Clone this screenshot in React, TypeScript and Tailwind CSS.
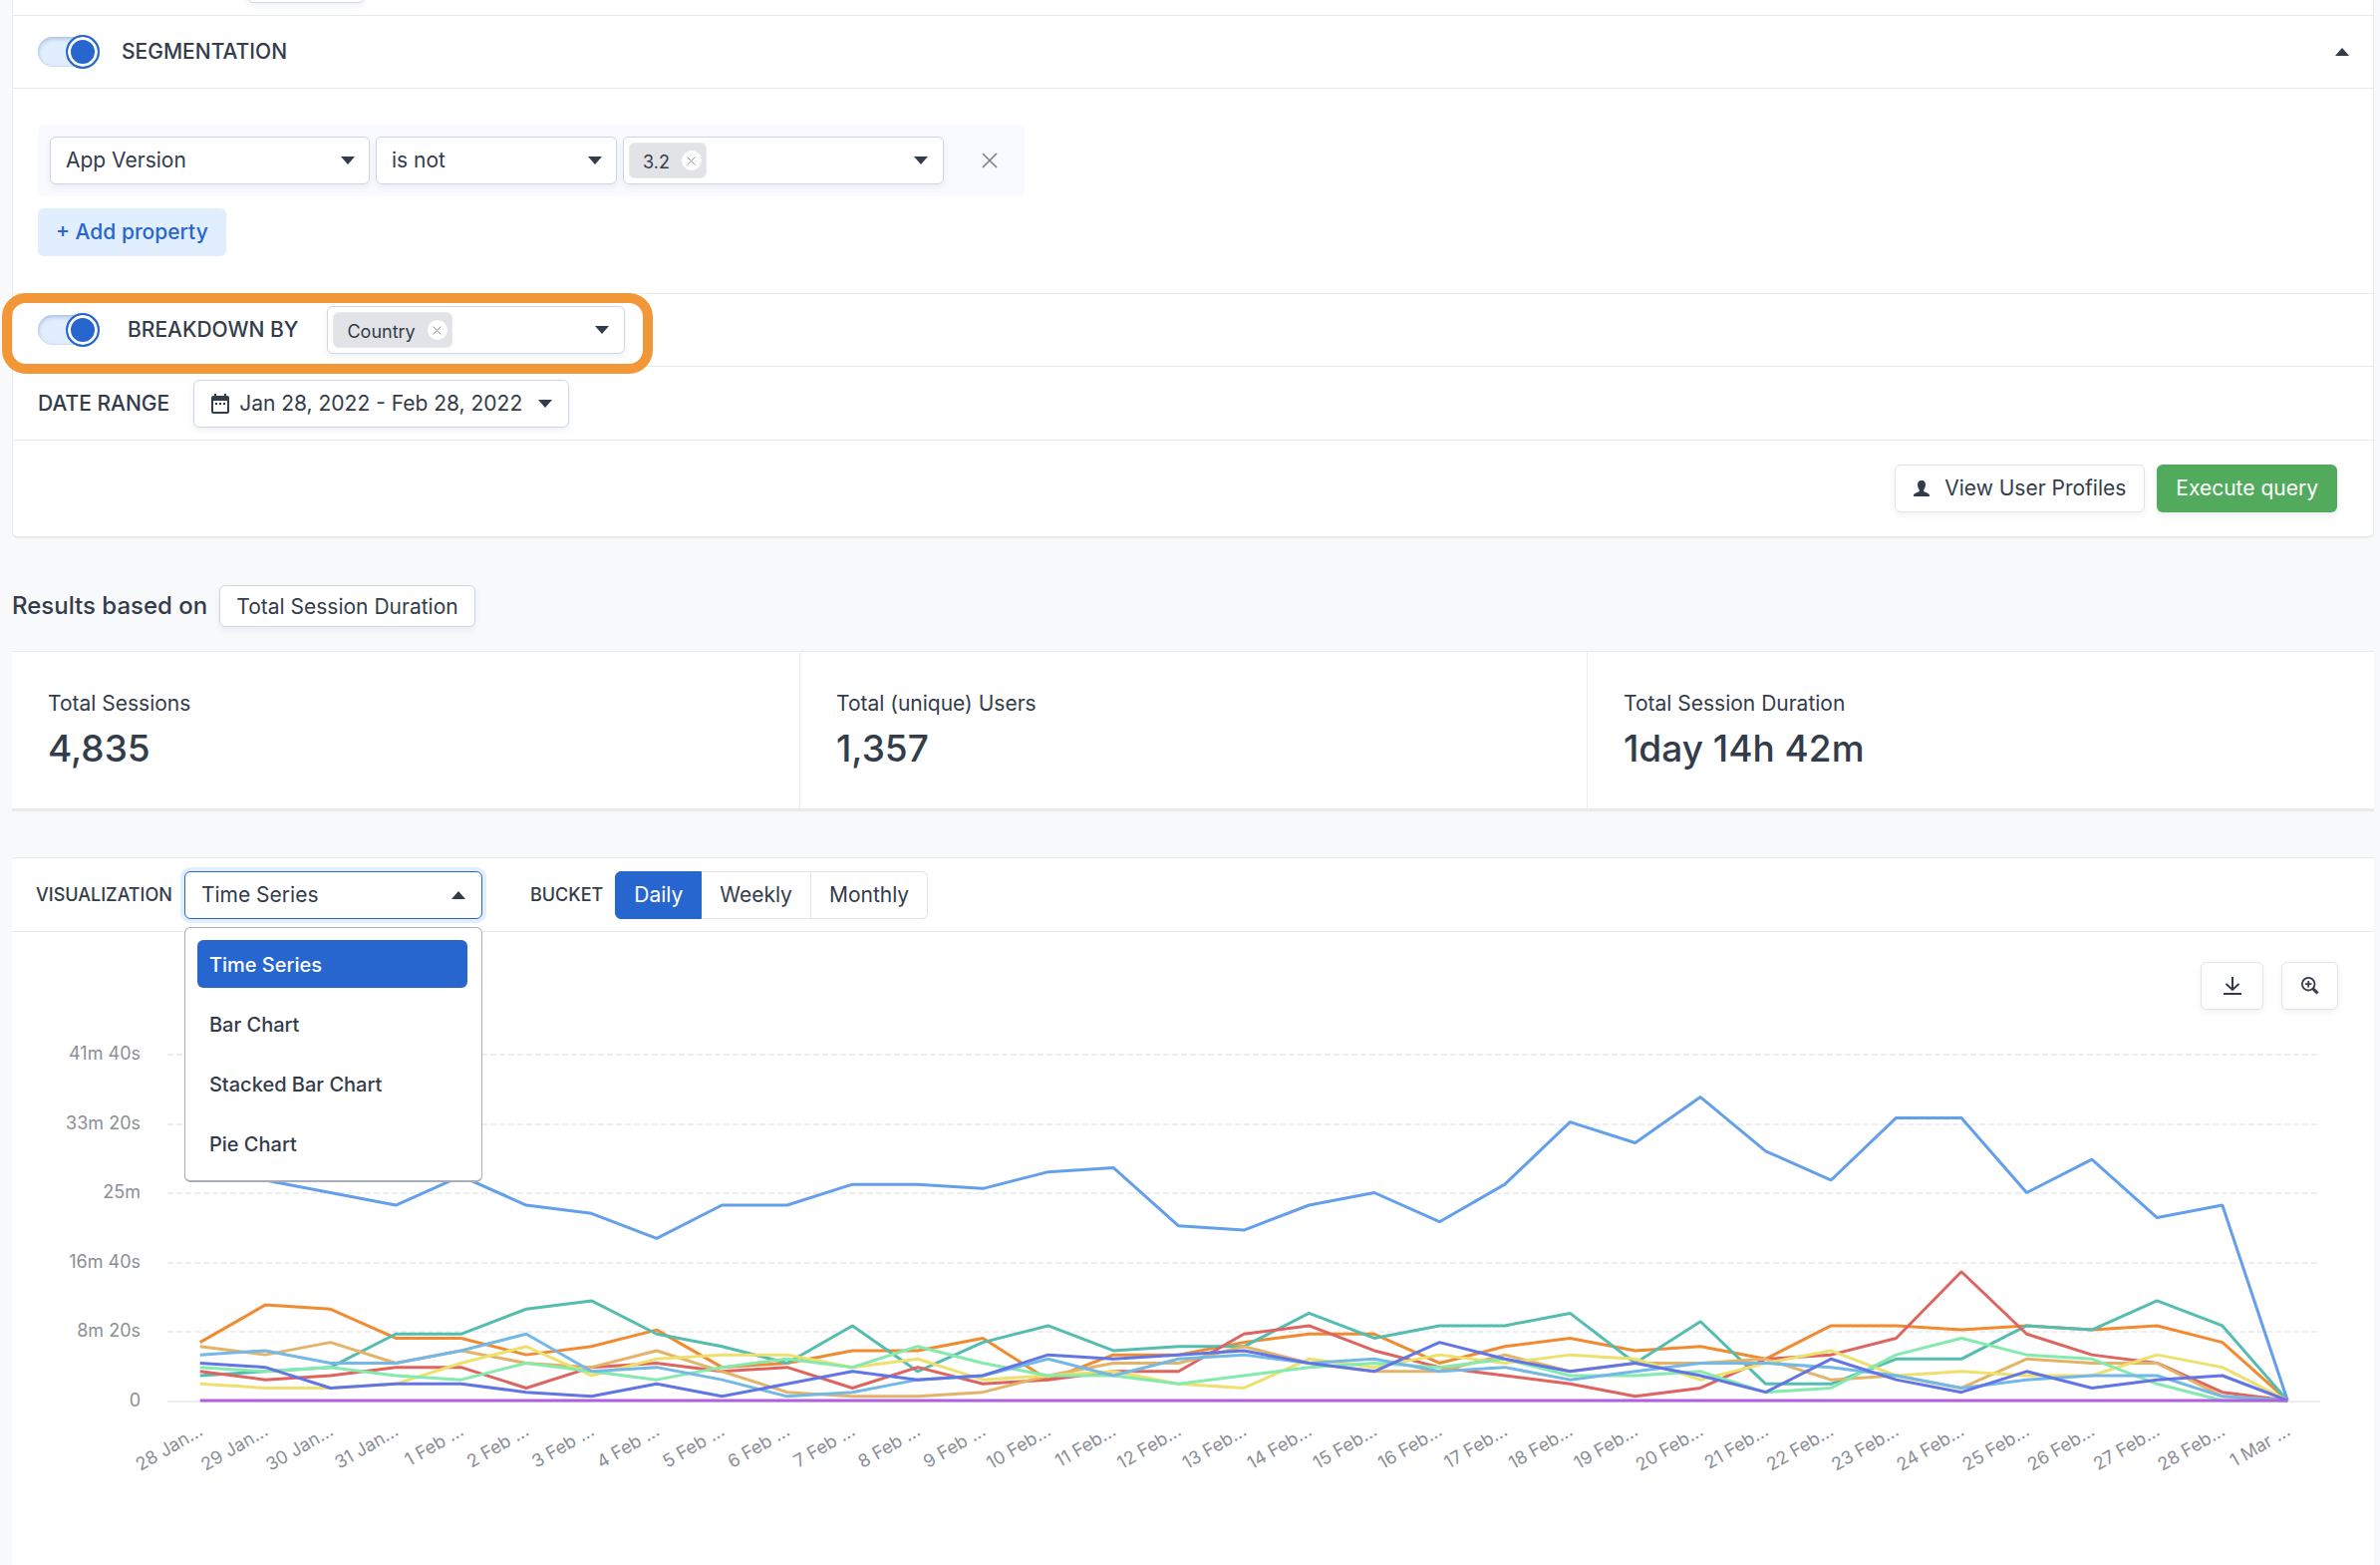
import { useId, useState } from 'react'
import type { ReactNode } from 'react'

const FIELD = 'rounded-md border border-[#cfd5e6] bg-white shadow-[0_3px_6px_rgba(40,50,80,0.07)]'
const PLAIN = 'rounded-md border border-[#e2e4e8] bg-white shadow-[0_3px_6px_rgba(40,50,80,0.06)]'

function Caret({ up = false }: { up?: boolean }) {
  return (
    <svg viewBox="0 0 14 8" className="h-2 w-3.5 shrink-0 fill-[#333c4a]" aria-hidden="true">
      <path d={up ? 'M0 8 7 0 14 8Z' : 'M0 0H14L7 8Z'} />
    </svg>
  )
}

function Cross({ className }: { className: string }) {
  return (
    <svg viewBox="0 0 16 16" className={className} fill="none" aria-hidden="true">
      <path d="M1 1 15 15M15 1 1 15" strokeWidth="1.6" />
    </svg>
  )
}

function Toggle({ id }: { id: string }) {
  const [on, setOn] = useState(true)
  return (
    <input
      id={id}
      type="checkbox"
      role="switch"
      checked={on}
      onChange={() => setOn(!on)}
      className="flex h-[30px] w-[62px] shrink-0 appearance-none items-center rounded-full bg-[#e1eefd] shadow-[inset_0_2px_4px_rgba(37,80,160,0.28),inset_0_0_2px_rgba(37,80,160,0.2)] before:size-[34px] before:shrink-0 before:rounded-full before:border-2 before:border-[#2766cf] before:bg-[#2766cf] before:shadow-[inset_0_0_0_3px_white] before:content-[''] checked:justify-end"
    />
  )
}

function Select({ label, value, className }: { label: string; value: string; className: string }) {
  return (
    <div className={`relative ${className}`}>
      <select aria-label={label} className={`h-12 w-full appearance-none px-[15px] pb-px ${FIELD}`}>
        <option>{value}</option>
      </select>
      <span className="pointer-events-none absolute inset-y-0 right-[15px] flex items-center">
        <Caret />
      </span>
    </div>
  )
}

function TagField({ label, tag, className }: { label: string; tag: string; className: string }) {
  return (
    <div className={`flex h-12 items-center pr-[15px] pl-[5px] ${FIELD} ${className}`}>
      <span className="flex h-9 items-center gap-3 rounded-md border border-[#e8eaee] bg-[#e2e3e7] pr-1 pl-[13px] text-lg">
        <span className="pt-1">{tag}</span>
        <button aria-label={`Remove ${tag}`} className="flex size-5 items-center justify-center rounded-full bg-white">
          <Cross className="size-[9px] stroke-[#888]" />
        </button>
      </span>
      <input aria-label={label} className="min-w-0 flex-1 outline-none" />
      <Caret />
    </div>
  )
}

function Stat({ label, value }: { label: string; value: string }) {
  return (
    <div className="border-l border-[#eceded] px-9 pt-9 first:border-l-0">
      <p className="text-[21px]/8">{label}</p>
      <p className="mt-1 text-[37px]/[50px] font-medium">{value}</p>
    </div>
  )
}

/* Session duration per day, in half minutes */
const SERIES = [
  { color: '#649fec', data: [55, 53, 50, 47, 54, 47, 45, 39, 47, 47, 52, 52, 51, 55, 56, 42, 41, 47, 50, 43, 52, 67, 62, 73, 60, 53, 68, 68, 50, 58, 44, 47, 0] },
  { color: '#f28a30', data: [14, 23, 22, 15, 15, 11, 13, 17, 8, 9, 12, 12, 15, 5, 11, 11, 14, 16, 16, 9, 13, 15, 12, 13, 10, 18, 18, 17, 18, 17, 18, 14, 0] },
  { color: '#54bdb0', data: [6, 7, 8, 16, 16, 22, 24, 16, 13, 9, 18, 7, 14, 18, 12, 13, 13, 21, 15, 18, 18, 21, 9, 19, 4, 4, 10, 10, 18, 17, 24, 18, 0] },
  { color: '#df6460', data: [7, 5, 6, 8, 8, 3, 8, 9, 7, 8, 3, 8, 4, 5, 7, 7, 16, 18, 12, 8, 6, 4, 1, 3, 10, 11, 15, 31, 16, 11, 9, 2, 0] },
  { color: '#e4b367', data: [13, 11, 14, 9, 12, 9, 8, 12, 7, 2, 1, 1, 2, 6, 9, 9, 13, 9, 7, 7, 11, 7, 9, 9, 10, 5, 6, 3, 10, 9, 9, 1, 0] },
  { color: '#eee06d', data: [4, 3, 3, 4, 9, 13, 6, 10, 11, 11, 8, 10, 5, 6, 7, 4, 3, 10, 8, 11, 9, 11, 10, 5, 9, 12, 6, 7, 6, 6, 11, 8, 0] },
  { color: '#85eaad', data: [8, 7, 8, 6, 5, 9, 7, 5, 8, 10, 8, 13, 9, 6, 6, 4, 6, 8, 9, 8, 10, 6, 6, 7, 2, 3, 11, 15, 11, 10, 4, 0, 0] },
  { color: '#73b8e6', data: [11, 12, 9, 9, 12, 16, 7, 8, 5, 1, 2, 5, 6, 10, 6, 10, 11, 9, 10, 7, 8, 5, 7, 9, 9, 8, 6, 3, 5, 6, 6, 1, 0] },
  { color: '#6275e6', data: [9, 8, 3, 4, 4, 2, 1, 4, 1, 4, 7, 5, 6, 11, 10, 11, 12, 9, 7, 14, 10, 7, 9, 6, 2, 10, 5, 2, 7, 3, 5, 6, 0] },
  { color: '#b25ee0', data: Array(33).fill(0) as number[] },
]

const DAYS = [
  ...[28, 29, 30, 31].map((d) => `${d} Jan...`),
  ...Array.from({ length: 28 }, (_, i) => (i < 9 ? `${i + 1} Feb ...` : `${i + 1} Feb...`)),
  '1 Mar ...',
]
const TICKS = ['0', '8m 20s', '16m 40s', '25m', '33m 20s', '41m 40s']

const PLOT = { left: 156, right: 2316, base: 392, unit: 4.17 }
const STEP = (PLOT.right - PLOT.left) / DAYS.length
const px = (i: number) => PLOT.left + STEP * (i + 0.5)
const py = (v: number) => PLOT.base - v * PLOT.unit

function Chart() {
  return (
    <svg viewBox="0 0 2370 556" className="block w-full" role="img" aria-label="Total session duration by country, daily">
      {TICKS.map((t, i) => {
        const y = Math.round(py(i * 16.67))
        return (
          <g key={t}>
            <line x1={PLOT.left} x2={PLOT.right} y1={y + 1} y2={y + 1} stroke="#eeeeef" strokeWidth="2" strokeDasharray={i ? '6 3' : undefined} />
            <text x="129" y={y + 6} textAnchor="end" fontSize="18" fill="#8b8e95">
              {t}
            </text>
          </g>
        )
      })}
      {SERIES.map((s) => (
        <polyline
          key={s.color}
          points={s.data.map((v, i) => `${px(i)},${py(v)}`).join(' ')}
          fill="none"
          stroke={s.color}
          strokeWidth="3"
          strokeLinejoin="bevel"
        />
      ))}
      {DAYS.map((d, i) => (
        <text key={d} transform={`translate(${px(i) + 4} 426) rotate(-30)`} textAnchor="end" fontSize="18" fill="#8b8e95">
          {d}
        </text>
      ))}
    </svg>
  )
}

function Row({ children, className }: { children: ReactNode; className: string }) {
  return <div className={`flex items-center border-b border-[#e9eaec] ${className}`}>{children}</div>
}

const KINDS = ['Time Series', 'Bar Chart', 'Stacked Bar Chart', 'Pie Chart']
const BUCKETS = ['Daily', 'Weekly', 'Monthly']

export default function App() {
  const segId = useId()
  const breakId = useId()
  const [kind, setKind] = useState(KINDS[0])
  const [open, setOpen] = useState(true)
  const [bucket, setBucket] = useState(BUCKETS[0])

  return (
    <main className="flex min-h-screen flex-col bg-[#f8f9fb] pr-1.5 pl-3 font-['Inter',sans-serif] text-[21px]/7 text-[#333c4a]">
      <section className="rounded-b-md border-x border-b-2 border-[#e9eaec] bg-white">
        <Row className="h-4 items-end! overflow-hidden pb-3 pl-[235px]">
          <button aria-label="Add event" className={`h-12 w-[118px] shrink-0 ${FIELD}`} />
        </Row>
        <Row className="h-[73px] gap-[22px] pr-6 pl-[25px]">
          <Toggle id={segId} />
          <label htmlFor={segId} className="flex-1 font-medium">
            SEGMENTATION
          </label>
          <button aria-label="Collapse segmentation">
            <Caret up />
          </button>
        </Row>
        <div className="border-b border-[#e9eaec] px-[25px] pt-9 pb-[37px]">
          <div className="flex h-[72px] w-[990px] items-center gap-1.5 rounded-md bg-[#f9faff] px-3">
            <Select label="Property" value="App Version" className="w-[321px]" />
            <Select label="Operator" value="is not" className="w-[242px]" />
            <TagField label="Value" tag="3.2" className="w-[322px]" />
            <button aria-label="Remove property" className="ml-8">
              <Cross className="size-4 stroke-[#7c8088]" />
            </button>
          </div>
          <button className="mt-3 flex h-12 items-center rounded-md bg-[#e1eefd] px-[18px] font-medium text-[#2766cf]">+ Add property</button>
        </div>
        <Row className="relative h-[73px] pl-[25px]">
          <Toggle id={breakId} />
          <label htmlFor={breakId} className="ml-7 font-medium">
            BREAKDOWN BY
          </label>
          <TagField label="Breakdown property" tag="Country" className="ml-[29px] w-[299px]" />
          <div className="pointer-events-none absolute -top-px -left-[11px] h-[81px] w-[653px] rounded-3xl border-10 border-[#f19737]" />
        </Row>
        <Row className="h-[74px] gap-6 pl-[25px] font-medium">
          DATE RANGE
          <button className={`flex h-12 items-center pr-4 pl-[17px] font-normal ${FIELD}`}>
            <svg viewBox="0 0 18 20" className="mr-2.5 h-5 w-[18px]" aria-hidden="true">
              <path fillRule="evenodd" fill="#333c4a" d="M3 0h2v2h8V0h2v2h1q2 0 2 2v14q0 2-2 2H2q-2 0-2-2V4q0-2 2-2h1ZM2 7v11h14V7ZM4 9h2v2H4Zm4 0h2v2H8Zm4 0h2v2h-2Z" />
            </svg>
            Jan 28, 2022 - Feb 28, 2022
            <span className="ml-4">
              <Caret />
            </span>
          </button>
        </Row>
        <div className="flex justify-end gap-3 py-6 pr-9">
          <button className={`flex h-12 items-center gap-[15px] px-[18px] ${PLAIN}`}>
            <svg viewBox="0 0 16 16" className="size-4 fill-[#333c4a]" aria-hidden="true">
              <path d="M8 0c3 0 4 2 4 4.500 0 2-1 3.500-1.700 5v1.500c1.200 1 5.700 1.500 5.700 4V16H0v-1c0-2.500 4.500-3 5.700-4V9.500C5 8 4 6.500 4 4.500 4 2 5 0 8 0Z" />
            </svg>
            View User Profiles
          </button>
          <button className="h-12 rounded-md bg-[#52ab5d] px-[19px] text-white shadow-[0_3px_6px_rgba(40,50,80,0.08)]">Execute query</button>
        </div>
      </section>

      <div className="mt-[47px] flex items-center gap-3">
        <h2 className="text-2xl/7 font-medium">Results based on</h2>
        <button className={`h-[42px] px-4 pt-0.5 ${FIELD}`}>Total Session Duration</button>
      </div>

      <section className="mt-6 grid h-[161px] grid-cols-3 border-t border-b-3 border-[#e9eaec] bg-white">
        <Stat label="Total Sessions" value="4,835" />
        <Stat label="Total (unique) Users" value="1,357" />
        <Stat label="Total Session Duration" value="1day 14h 42m" />
      </section>

      <section className="mt-[46px] flex-1 border-t border-[#e9eaec] bg-white">
        <Row className="h-[74px] pl-6">
          <span id="kind-label" className="text-lg font-medium">
            VISUALIZATION
          </span>
          <div className="relative ml-3 w-[299px]">
            <button
              aria-labelledby="kind-label"
              aria-haspopup="listbox"
              aria-expanded={open}
              onClick={() => setOpen(!open)}
              className="flex h-12 w-full items-center justify-between rounded-md border border-[#2766cf] bg-white px-4 ring-4 ring-[#e1eefd]"
            >
              {kind}
              <Caret up={open} />
            </button>
            {open && (
              <ul
                role="listbox"
                aria-labelledby="kind-label"
                className="absolute top-14 left-0 flex h-64 w-full flex-col gap-3 rounded-md border border-b-2 border-[#a9adb8] bg-white pt-3 pr-3.5 pl-3 text-xl font-medium"
              >
                {KINDS.map((k) => (
                  <li key={k} role="option" aria-selected={k === kind}>
                    <button
                      onClick={() => setKind(k)}
                      className={`h-12 w-full rounded-md px-3 pt-0.5 text-left ${k === kind ? 'bg-[#2766cf] text-white' : ''}`}
                    >
                      {k}
                    </button>
                  </li>
                ))}
              </ul>
            )}
          </div>
          <span id="bucket-label" className="ml-12 text-lg font-medium">
            BUCKET
          </span>
          <div role="group" aria-labelledby="bucket-label" className="ml-3 flex">
            {BUCKETS.map((b) => (
              <button
                key={b}
                aria-pressed={b === bucket}
                onClick={() => setBucket(b)}
                className={`h-12 border-y border-r px-[18px] first:rounded-l-md first:border-l last:rounded-r-md ${
                  b === bucket ? 'border-[#2766cf] bg-[#2766cf] text-white' : 'border-[#e2e4e8] bg-white'
                }`}
              >
                {b}
              </button>
            ))}
          </div>
        </Row>
        <div className="flex justify-end gap-[18px] pt-[30px] pr-9">
          <button aria-label="Download" className={`flex h-12 w-[63px] items-center justify-center ${PLAIN}`}>
            <svg viewBox="0 0 18 18" className="size-[18px]" fill="none" stroke="#333c4a" strokeWidth="2" aria-hidden="true">
              <path d="M9 0V13M2.500 7 9 13 15.500 7M0 17H18" />
            </svg>
          </button>
          <button aria-label="Zoom in" className={`flex h-12 w-[57px] items-center justify-center ${PLAIN}`}>
            <svg viewBox="0 0 18 18" className="size-[18px]" fill="none" stroke="#333c4a" strokeWidth="1.800" aria-hidden="true">
              <circle cx="7.200" cy="7.200" r="6.300" />
              <path d="M7.200 4V10.400M4 7.200H10.400" />
              <path d="M11.500 11.500 16.500 16.500" strokeWidth="3" />
            </svg>
          </button>
        </div>
        <Chart />
      </section>
    </main>
  )
}
